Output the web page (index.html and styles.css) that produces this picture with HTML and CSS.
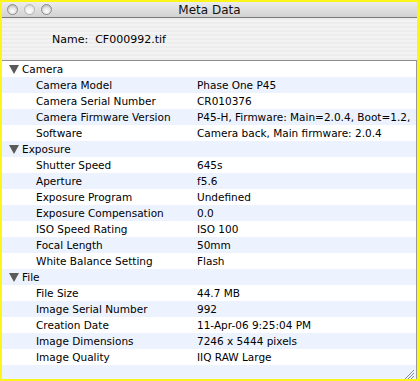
FILE: index.html
```html
<!DOCTYPE html>
<html lang="en">
  <head>
    <meta charset="UTF-8" />
    <title>Meta Data</title>
    <link rel="stylesheet" href="styles.css">
  </head>
  <body>
    <div class="window">
      <div class="titlebar">
        <div class="lights">
          <span class="light"></span>
          <span class="light off"></span>
          <span class="light"></span>
        </div>
        <div class="title">Meta Data</div>
        <div></div>
      </div>

      <div class="header">
        <span class="name-label">Name:</span>
        <span>CF000992.tif</span>
      </div>

      <div class="list">
        <!-- Camera -->
        <div class="row group">
          <svg class="tri" width="10" height="9" viewBox="0 0 10 9"><path d="M0 0h10L5 9z" fill="#5a5a5a"/></svg>
          <span>Camera</span>
        </div>
        <div class="row"><span class="key">Camera Model</span><span class="val">Phase One P45</span></div>
        <div class="row"><span class="key">Camera Serial Number</span><span class="val">CR010376</span></div>
        <div class="row"><span class="key">Camera Firmware Version</span><span class="val">P45-H, Firmware: Main=2.0.4, Boot=1.2,</span></div>
        <div class="row"><span class="key">Software</span><span class="val">Camera back, Main firmware: 2.0.4</span></div>

        <!-- Exposure -->
        <div class="row group">
          <svg class="tri" width="10" height="9" viewBox="0 0 10 9"><path d="M0 0h10L5 9z" fill="#5a5a5a"/></svg>
          <span>Exposure</span>
        </div>
        <div class="row"><span class="key">Shutter Speed</span><span class="val">645s</span></div>
        <div class="row"><span class="key">Aperture</span><span class="val">f5.6</span></div>
        <div class="row"><span class="key">Exposure Program</span><span class="val">Undefined</span></div>
        <div class="row"><span class="key">Exposure Compensation</span><span class="val">0.0</span></div>
        <div class="row"><span class="key">ISO Speed Rating</span><span class="val">ISO 100</span></div>
        <div class="row"><span class="key">Focal Length</span><span class="val">50mm</span></div>
        <div class="row"><span class="key">White Balance Setting</span><span class="val">Flash</span></div>

        <!-- File -->
        <div class="row group">
          <svg class="tri" width="10" height="9" viewBox="0 0 10 9"><path d="M0 0h10L5 9z" fill="#5a5a5a"/></svg>
          <span>File</span>
        </div>
        <div class="row"><span class="key">File Size</span><span class="val">44.7 MB</span></div>
        <div class="row"><span class="key">Image Serial Number</span><span class="val">992</span></div>
        <div class="row"><span class="key">Creation Date</span><span class="val">11-Apr-06 9:25:04 PM</span></div>
        <div class="row"><span class="key">Image Dimensions</span><span class="val">7246 x 5444 pixels</span></div>
        <div class="row"><span class="key">Image Quality</span><span class="val">IIQ RAW Large</span></div>
        <div class="row"></div>

        <svg class="grip" width="11" height="11" viewBox="0 0 11 11">
          <path d="M10 1L1 10M10 4L4 10M10 7L7 10" stroke="#8a8a8a" stroke-width="1"/>
        </svg>
      </div>
    </div>
  </body>
</html>
```

FILE: styles.css
```css
body {
  margin: 0;
  background-color: #fbf51a;
  font-family: "DejaVu Sans", sans-serif;
  font-size: 10.5px;
  color: #000;
}

.window {
  margin: 2px 3px 0 2px;
  height: 377px;
  background-color: #fff;
  overflow: hidden;
  display: flex;
  flex-direction: column;
}

.titlebar {
  height: 15px;
  flex: none;
  display: grid;
  grid-template-columns: 1fr auto 1fr;
  align-items: center;
  background: linear-gradient(#ececec, #d2d2d2);
  border-bottom: 1px solid #7a7a7a;
}

.lights {
  display: flex;
  gap: 6px;
  padding-left: 5px;
}

.light {
  width: 11px;
  height: 11px;
  border-radius: 50%;
  box-sizing: border-box;
  border: 1px solid #8c8c8c;
  background: radial-gradient(circle at 50% 70%, #ffffff 0, #e4e4e4 45%, #a8a8a8 100%);
}

.light.off {
  border-color: #b4b4b4;
  background: radial-gradient(circle at 50% 70%, #ffffff 0, #eeeeee 50%, #c8c8c8 100%);
}

.title {
  font-size: 12px;
  color: #111;
}

.header {
  height: 42px;
  flex: none;
  display: flex;
  align-items: center;
  padding-left: 50px;
  gap: 7px;
  font-size: 11px;
  background: repeating-linear-gradient(#ededed 0 2px, #f3f3f3 2px 4px);
  border-bottom: 1px solid #8e8e8e;
}

.list {
  flex: 1;
  position: relative;
  border-right: 1px solid #9a9a9a;
}

.row {
  height: 16px;
  display: flex;
  align-items: center;
  white-space: nowrap;
  overflow: hidden;
}

.row:nth-child(even) {
  background-color: #edf3fe;
}

.row.group {
  padding-left: 7px;
}

.tri {
  margin-right: 3px;
}

.key {
  width: 161px;
  flex: none;
  padding-left: 34px;
}

.val {
  flex: none;
}

.grip {
  position: absolute;
  right: 1px;
  bottom: 1px;
}
```
